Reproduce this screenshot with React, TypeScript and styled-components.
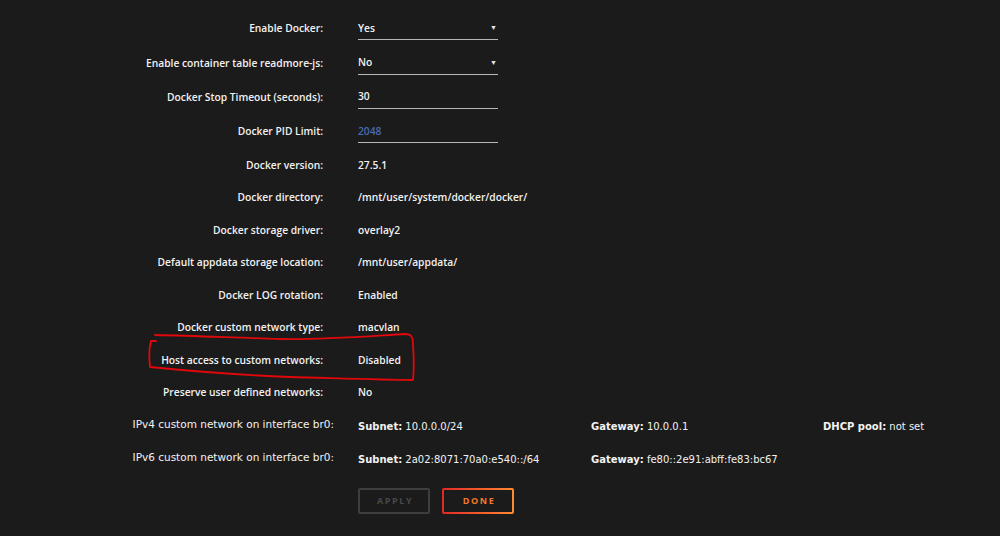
import React from "react";
import styled, { createGlobalStyle, css } from "styled-components";

const Global = createGlobalStyle`
  html, body {
    margin: 0;
    padding: 0;
    background: #1c1b1b;
  }
  body {
    width: 1000px;
    height: 536px;
    overflow: hidden;
    font-family: "Open Sans", "Noto Sans", sans-serif;
    color: #f2f2f2;
  }
`;

const Page = styled.div`
  position: relative;
  width: 1000px;
  height: 536px;
  padding-top: 11px;
  box-sizing: border-box;
`;

const Row = styled.div<{ $tall?: boolean; $ip?: boolean }>`
  display: flex;
  align-items: center;
  box-sizing: border-box;
  height: ${(p) => (p.$tall ? "34.4px" : "32.5px")};
  gap: ${(p) => (p.$ip ? "24px" : "35px")};
  ${(p) =>
    p.$ip &&
    css`
      padding-bottom: 1px;
    `}
`;

const Label = styled.div<{ $ip?: boolean }>`
  width: ${(p) => (p.$ip ? "334px" : "323px")};
  flex: none;
  text-align: right;
  font-size: 10.25px;
  font-weight: 600;
  white-space: nowrap;
  ${(p) =>
    p.$ip &&
    css`
      font-family: "DejaVu Sans", sans-serif;
      font-weight: 400;
      font-size: 10.5px;
    `}
`;

const Value = styled.div`
  font-size: 10.25px;
  font-weight: 600;
  white-space: nowrap;
`;

const Field = styled.div<{ $placeholder?: boolean }>`
  width: 140px;
  height: 24px;
  box-sizing: border-box;
  border-bottom: 1px solid #b8b8b8;
  display: flex;
  align-items: center;
  font-size: 10.25px;
  font-weight: 600;
  color: ${(p) => (p.$placeholder ? "#4a6bb5" : "#f2f2f2")};
`;

const Arrow = styled.span`
  margin-left: auto;
  margin-right: 1px;
  font-size: 7px;
  color: #e6e6e6;
`;

const NetCell = styled.span<{ $w?: number }>`
  display: inline-block;
  width: ${(p) => (p.$w ? `${p.$w}px` : "auto")};
  font-family: "DejaVu Sans", sans-serif;
  font-size: 10px;
  font-weight: 400;
  white-space: nowrap;
  b {
    font-weight: 700;
  }
`;

const Buttons = styled.div`
  display: flex;
  gap: 12px;
  padding: 14px 0 0 358px;
`;

const Button = styled.button<{ $primary?: boolean }>`
  width: 72px;
  height: 26px;
  box-sizing: border-box;
  background: transparent;
  font-family: "Open Sans", sans-serif;
  font-size: 9px;
  font-weight: 700;
  letter-spacing: 1.6px;
  padding: 0 0 0 2px;
  border-radius: 2px;
  ${(p) =>
    p.$primary
      ? css`
          border: 2px solid transparent;
          background: linear-gradient(#1c1b1b, #1c1b1b) padding-box,
            linear-gradient(90deg, #e22828, #ff8b2f) border-box;
          color: #f07a2a;
        `
      : css`
          border: 2px solid #3f3e3e;
          color: #4a4949;
        `}
`;

const Scribble = styled.svg`
  position: absolute;
  left: 0;
  top: 0;
  pointer-events: none;
`;

const rows: [string, React.ReactNode][] = [
  ["Docker version:", "27.5.1"],
  ["Docker directory:", "/mnt/user/system/docker/docker/"],
  ["Docker storage driver:", "overlay2"],
  ["Default appdata storage location:", "/mnt/user/appdata/"],
  ["Docker LOG rotation:", "Enabled"],
  ["Docker custom network type:", "macvlan"],
  ["Host access to custom networks:", "Disabled"],
  ["Preserve user defined networks:", "No"],
];

export default function App() {
  return (
    <>
      <Global />
      <Page>
        <Row $tall>
          <Label>Enable Docker:</Label>
          <Field>
            Yes<Arrow>▼</Arrow>
          </Field>
        </Row>
        <Row $tall>
          <Label>Enable container table readmore-js:</Label>
          <Field>
            No<Arrow>▼</Arrow>
          </Field>
        </Row>
        <Row $tall>
          <Label>Docker Stop Timeout (seconds):</Label>
          <Field>30</Field>
        </Row>
        <Row $tall>
          <Label>Docker PID Limit:</Label>
          <Field $placeholder>2048</Field>
        </Row>
        {rows.map(([label, value]) => (
          <Row key={label}>
            <Label>{label}</Label>
            <Value>{value}</Value>
          </Row>
        ))}
        <Row $ip>
          <Label $ip>IPv4 custom network on interface br0:</Label>
          <div>
            <NetCell $w={233}>
              <b>Subnet:</b> 10.0.0.0/24
            </NetCell>
            <NetCell $w={232}>
              <b>Gateway:</b> 10.0.0.1
            </NetCell>
            <NetCell>
              <b>DHCP pool:</b> not set
            </NetCell>
          </div>
        </Row>
        <Row $ip>
          <Label $ip>IPv6 custom network on interface br0:</Label>
          <div>
            <NetCell $w={233}>
              <b>Subnet:</b> 2a02:8071:70a0:e540::/64
            </NetCell>
            <NetCell $w={232}>
              <b>Gateway:</b> fe80::2e91:abff:fe83:bc67
            </NetCell>
          </div>
        </Row>
        <Buttons>
          <Button disabled>APPLY</Button>
          <Button $primary>DONE</Button>
        </Buttons>
        <Scribble width="1000" height="536" viewBox="0 0 1000 536">
          <path
            d="M155 335 C 200 336, 240 338, 280 339 C 320 340, 370 336, 405 334 C 412 334, 413 338, 413 345 C 414 358, 414 370, 413 380 C 380 380, 330 378, 290 377 C 240 375, 190 371, 150 367 C 149 358, 149 348, 151 341 L 156 341"
            fill="none"
            stroke="#e0080b"
            strokeWidth="1.8"
            strokeLinecap="round"
            strokeLinejoin="round"
          />
        </Scribble>
      </Page>
    </>
  );
}
